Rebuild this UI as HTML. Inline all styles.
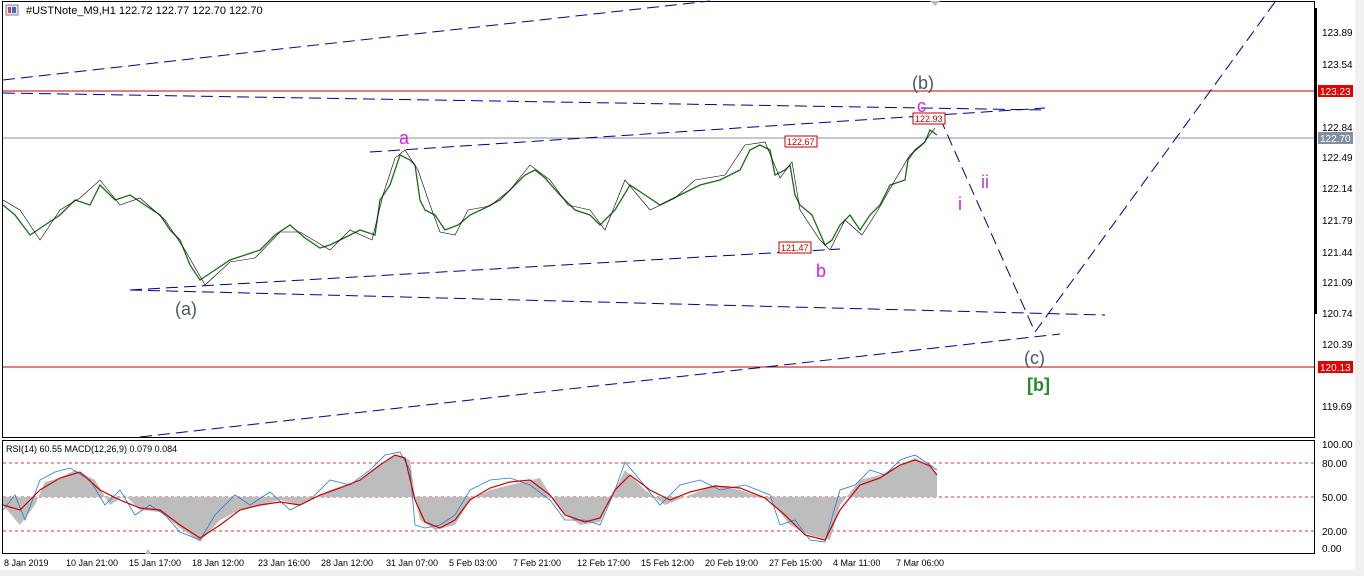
<!DOCTYPE html>
<html><head><style>
body{margin:0;background:#fff;width:1364px;height:576px;overflow:hidden;font-family:"Liberation Sans",sans-serif}
svg text{font-family:"Liberation Sans",sans-serif}
</style></head><body>
<svg width="1364" height="576" viewBox="0 0 1364 576" xmlns="http://www.w3.org/2000/svg">
<rect width="1364" height="576" fill="#fff"/>
<rect x="1355" y="0" width="9" height="576" fill="#f0f0f0"/>
<rect x="0" y="570" width="1364" height="6" fill="#f0f0f0"/>
<!-- pane borders -->
<rect x="2.5" y="1.5" width="1312" height="436" fill="none" stroke="#000"/>
<rect x="2.5" y="440.5" width="1312" height="113" fill="none" stroke="#000"/>
<rect x="1314" y="8" width="3" height="306" fill="#000"/>
<!-- icon + title -->
<rect x="6" y="5" width="12" height="10" fill="#e8e8f8" stroke="#666" stroke-width="0.8"/>
<rect x="8" y="7" width="3" height="6" fill="#c44"/><rect x="12" y="7" width="4" height="6" fill="#46c"/>
<text x="26" y="14" font-size="11" fill="#000">#USTNote_M9,H1  122.72 122.77 122.70 122.70</text>
<!-- horizontal lines -->
<line x1="3" y1="91" x2="1314" y2="91" stroke="#c00000" stroke-width="1"/>
<line x1="3" y1="367" x2="1314" y2="367" stroke="#c00000" stroke-width="1"/>
<line x1="3" y1="138" x2="1314" y2="138" stroke="#8090a0" stroke-width="1"/>
<!-- dashed trend lines -->
<g stroke="#00008b" stroke-width="1" fill="none" stroke-dasharray="12,6">
<line x1="3" y1="80" x2="710" y2="1"/>
<line x1="3" y1="93" x2="1045" y2="110"/>
<line x1="370" y1="152" x2="1045" y2="108"/>
<line x1="130" y1="290" x2="840" y2="249"/>
<line x1="130" y1="290" x2="1105" y2="315"/>
<line x1="140" y1="437" x2="1060" y2="334"/>
<line x1="940" y1="118" x2="1035" y2="332"/>
<line x1="1035" y1="332" x2="1275" y2="2"/>
</g>
<!-- price path -->
<polyline fill="none" stroke="#1a6b1a" stroke-width="1.3" points="3,205 15,215 30,235 45,225 60,215 75,200 90,205 100,185 115,200 130,195 145,205 160,215 170,230 180,240 190,265 200,280 215,270 230,260 245,255 260,250 275,235 290,225 305,238 320,248 330,245 340,240 350,235 360,230 375,235 380,200 390,185 400,155 410,160 415,165 420,200 425,210 435,215 445,230 458,225 470,215 485,208 500,200 515,185 525,175 535,170 545,178 560,195 575,210 590,215 600,225 615,210 630,185 645,195 660,205 680,195 700,185 720,180 740,170 750,150 760,145 770,150 775,175 785,170 790,165 795,195 800,205 812,215 825,245 832,240 840,225 850,215 860,230 870,215 880,205 890,185 905,180 908,160 915,150 925,142 930,130 937,135"/>
<polyline fill="none" stroke="#000" stroke-width="0.6" points="3,200 20,210 40,240 60,210 80,198 100,180 120,205 140,198 165,220 185,250 205,285 230,262 255,258 280,232 300,232 330,250 350,230 372,240 383,195 395,158 405,150 418,170 430,205 440,232 455,235 468,210 490,206 510,190 530,165 550,180 568,205 590,210 605,230 625,180 650,210 675,198 695,180 725,175 745,145 765,142 780,178 792,162 800,210 820,240 830,250 845,220 862,235 878,210 895,180 910,155 922,145 935,128"/>
<!-- price labels -->
<g font-size="9">
<rect x="785" y="136" width="32" height="11" fill="#fff" stroke="#c00000"/><text x="787" y="145" fill="#c00000">122.67</text>
<rect x="913" y="113" width="32" height="11" fill="#fff" stroke="#c00000"/><text x="915" y="122" fill="#c00000">122.93</text>
<rect x="779" y="242" width="32" height="11" fill="#fff" stroke="#c00000"/><text x="781" y="251" fill="#c00000">121.47</text>
</g>
<!-- wave labels -->
<g font-size="18">
<text x="175" y="315" fill="#4a5a5a">(a)</text>
<text x="912" y="89" fill="#4a5a5a">(b)</text>
<text x="1024" y="364" fill="#4a5a5a">(c)</text>
<text x="1027" y="391" fill="#2a8a2a" font-weight="bold">[b]</text>
<text x="399" y="144" fill="#e020e0">a</text>
<text x="816" y="277" fill="#e020e0">b</text>
<text x="917" y="112" fill="#e020e0">c</text>
<text x="958" y="210" fill="#e020e0">i</text>
<text x="981" y="188" fill="#c040c0">ii</text>
</g>
<!-- right axis -->
<g font-size="10" fill="#000">
<text x="1322" y="36">123.89</text><text x="1322" y="68">123.54</text>
<text x="1322" y="131">122.84</text><text x="1322" y="161">122.49</text>
<text x="1322" y="192">122.14</text><text x="1322" y="224">121.79</text>
<text x="1322" y="256">121.44</text><text x="1322" y="286">121.09</text>
<text x="1322" y="317">120.74</text><text x="1322" y="348">120.39</text>
<text x="1322" y="410">119.69</text>
<rect x="1318" y="85" width="35" height="12" fill="#e00000"/><text x="1320" y="95" fill="#fff">123.23</text>
<rect x="1318" y="132" width="35" height="12" fill="#8090a0"/><text x="1320" y="142" fill="#fff">122.70</text>
<rect x="1318" y="361" width="35" height="12" fill="#e00000"/><text x="1320" y="371" fill="#fff">120.13</text>
<text x="1322" y="448">100.00</text><text x="1322" y="467">80.00</text>
<text x="1322" y="501">50.00</text><text x="1322" y="535">20.00</text>
<text x="1322" y="552">0.00</text>
</g>
<!-- indicator -->
<g stroke="#c00000" stroke-dasharray="3,3" stroke-width="0.8">
<line x1="3" y1="463" x2="1314" y2="463"/><line x1="3" y1="497" x2="1314" y2="497"/><line x1="3" y1="531" x2="1314" y2="531"/>
</g>
<polygon fill="#bdbdbd" points="3,497 3,505 20,525 35,505 45,482 60,478 75,470 95,480 110,505 125,495 140,510 160,512 180,528 200,542 220,520 240,510 260,505 280,500 300,505 330,490 360,480 380,465 395,455 410,460 415,497 420,520 435,530 455,525 470,500 490,490 510,485 540,478 560,510 580,525 600,522 610,500 625,470 645,490 665,505 690,495 715,485 740,490 770,500 790,525 810,535 830,540 840,505 860,480 880,475 900,465 915,458 930,465 937,475 937,497"/>
<polyline fill="none" stroke="#2a7ad0" stroke-width="0.8" points="3,510 15,495 25,520 40,480 55,472 70,468 90,480 105,505 120,490 135,515 150,505 165,515 180,532 200,540 215,515 235,495 250,505 270,492 290,510 310,500 330,480 350,485 370,470 385,455 400,452 410,470 415,525 425,528 440,525 455,515 470,490 490,480 510,478 530,485 550,500 565,520 585,520 600,525 615,490 625,462 640,480 660,505 680,485 700,480 720,490 745,485 770,495 780,525 795,520 810,540 825,542 840,490 855,485 870,470 885,475 900,460 915,455 930,465 937,470"/>
<polyline fill="none" stroke="#d00000" stroke-width="1.2" points="3,505 20,510 40,490 60,478 80,472 100,490 120,500 140,508 160,510 180,525 200,538 220,525 240,510 260,505 280,502 300,505 320,495 340,488 360,480 380,465 395,455 405,458 415,500 425,522 440,528 455,520 470,500 490,488 510,482 530,480 550,495 565,515 585,522 600,518 615,490 630,475 650,490 670,500 690,492 715,486 740,488 765,498 785,515 805,535 825,540 840,510 860,485 880,478 900,465 915,460 930,466 937,475"/>
<text x="6" y="452" font-size="9" fill="#000">RSI(14) 60.55 MACD(12,26,9) 0.079 0.084</text>
<!-- time axis -->
<g font-size="9" fill="#000">
<text x="4" y="566">8 Jan 2019</text><text x="66" y="566">10 Jan 21:00</text><text x="129" y="566">15 Jan 17:00</text>
<text x="192" y="566">18 Jan 12:00</text><text x="258" y="566">23 Jan 16:00</text><text x="321" y="566">28 Jan 12:00</text>
<text x="386" y="566">31 Jan 07:00</text><text x="449" y="566">5 Feb 03:00</text><text x="513" y="566">7 Feb 21:00</text>
<text x="577" y="566">12 Feb 17:00</text><text x="641" y="566">15 Feb 12:00</text><text x="705" y="566">20 Feb 19:00</text>
<text x="769" y="566">27 Feb 15:00</text><text x="833" y="566">4 Mar 11:00</text><text x="896" y="566">7 Mar 06:00</text>
</g>
<polygon points="145,554 151,554 148,549" fill="#bbb"/>
<polygon points="930,1 940,1 935,6" fill="#bbb"/>
</svg>
</body></html>
